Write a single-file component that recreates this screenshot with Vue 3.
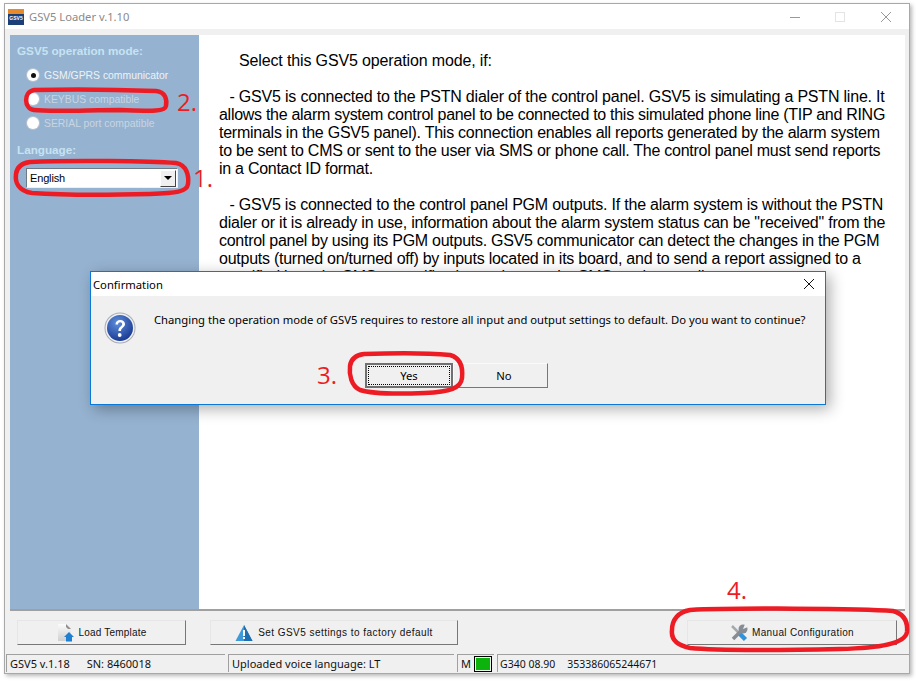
<script setup>
const paragraphs = [
  { cls: 'intro', lines: [{ t: 'Select this GSV5 operation mode, if:', ls: -0.14 }] },
  { cls: 'p', lines: [
    { t: '  - GSV5 is connected to the PSTN dialer of the control panel. GSV5 is simulating a PSTN line. It', ls: -0.2, first: true },
    { t: 'allows the alarm system control panel to be connected to this simulated phone line (TIP and RING', ls: -0.285 },
    { t: 'terminals in the GSV5 panel). This connection enables all reports generated by the alarm system', ls: -0.25 },
    { t: 'to be sent to CMS or sent to the user via SMS or phone call. The control panel must send reports', ls: -0.26 },
    { t: 'in a Contact ID format.', ls: -0.27 }
  ] },
  { cls: 'p', lines: [
    { t: '  - GSV5 is connected to the control panel PGM outputs. If the alarm system is without the PSTN', ls: -0.22, first: true },
    { t: 'dialer or it is already in use, information about the alarm system status can be "received" from the', ls: -0.22 },
    { t: 'control panel by using its PGM outputs. GSV5 communicator can detect the changes in the PGM', ls: -0.27 },
    { t: 'outputs (turned on/turned off) by inputs located in its board, and to send a report assigned to a', ls: -0.25 },
    { t: 'specified input by SMS, or notification to the user by SMS or phone call.', ls: -0.25 }
  ] }
]
const modes = [
  { label: 'GSM/GPRS communicator', on: true },
  { label: 'KEYBUS compatible', on: false },
  { label: 'SERIAL port compatible', on: false }
]
</script>

<template>
  <div class="page">
    <div class="window">
      <header class="titlebar">
        <svg class="appicon" viewBox="0 0 16 16" width="16" height="16">
          <rect width="16" height="16" fill="#1d3f78"/>
          <rect width="16" height="5" fill="#e8892c"/>
          <text x="8" y="11" text-anchor="middle" class="icontext">GSV5</text>
        </svg>
        <span class="apptitle">GSV5 Loader v.1.10</span>
        <div class="winctl">
          <svg viewBox="0 0 46 12" width="46" height="12"><path d="M19 6.500h10" stroke="#999" fill="none"/></svg>
          <svg viewBox="0 0 46 12" width="46" height="12"><rect x="18.500" y="1.500" width="9" height="9" stroke="#e4e4e4" fill="none"/></svg>
          <svg viewBox="0 0 46 12" width="46" height="12"><path d="M18 1l10 10M28 1L18 11" stroke="#999" fill="none"/></svg>
        </div>
      </header>

      <main class="body">
        <aside class="side">
          <div class="sidehead">GSV5 operation mode:</div>
          <div class="modes">
            <label v-for="m in modes" :key="m.label" class="mode" :class="{ on: m.on }">
              <span class="radio"><span v-if="m.on" class="dot"></span></span>
              <span>{{ m.label }}</span>
            </label>
          </div>
          <div class="sidehead lang">Language:</div>
          <div class="combo">
            <span class="comboval">English</span>
            <span class="comboarrow"><span class="tri"></span></span>
          </div>
        </aside>
        <section class="content">
          <p v-for="(p, i) in paragraphs" :key="i" :class="p.cls">
            <span
              v-for="(l, j) in p.lines"
              :key="j"
              class="line"
              :class="{ first: l.first }"
              :style="{ letterSpacing: l.ls + 'px' }"
            >{{ l.t }}</span>
          </p>
        </section>
      </main>

      <div class="actions">
        <button class="btn load">
          <svg viewBox="0 0 18 18" width="18" height="18">
            <defs>
              <linearGradient id="docg" x1="0" y1="0" x2="0" y2="1">
                <stop offset="0" stop-color="#fbfbfb"/>
                <stop offset="1" stop-color="#cfcfcf"/>
              </linearGradient>
            </defs>
            <path d="M2 0h8l5 5v12H2z" fill="url(#docg)"/>
            <path d="M10 0l5 5h-3l-2-2z" fill="#8f8f8f"/>
            <path d="M13 8l5 5h-2v4.500h-6V13H8z" fill="#1f7fd0"/>
          </svg>
          <span>Load Template</span>
        </button>
        <button class="btn factory">
          <svg viewBox="0 0 18 16" width="18" height="16">
            <path d="M9 0l8.500 16H.5z" fill="#3f9ad8"/>
            <path d="M9 0l8.500 16H9z" fill="#1d6fb0"/>
            <rect x="8" y="5" width="2" height="6" fill="#fff"/>
            <rect x="8" y="12" width="2" height="2" fill="#fff"/>
          </svg>
          <span>Set GSV5 settings to factory default</span>
        </button>
        <button class="btn manual">
          <svg viewBox="0 0 18 18" width="18" height="18">
            <path d="M2 2l7 7" stroke="#a4a9ae" stroke-width="2.500" fill="none"/>
            <path d="M9 9l6.500 6.500" stroke="#2f93dc" stroke-width="4.500" fill="none"/>
            <path d="M3 15l8-8" stroke="#858c93" stroke-width="3.500" fill="none"/>
            <circle cx="13" cy="5" r="4.500" fill="#858c93"/>
            <path d="M13 5l2-5h3v3z" fill="#f0f0f0"/>
          </svg>
          <span>Manual Configuration</span>
        </button>
      </div>

      <footer class="status">
        <div class="cell c1"><span>GSV5 v.1.18</span><span class="sn">SN: 8460018</span></div>
        <div class="cell c2">Uploaded voice language: LT</div>
        <div class="cell c3">M<span class="led"></span></div>
        <div class="cell c4">G340 08.90<span class="imei">353386065244671</span></div>
      </footer>

      <div class="dialog">
        <div class="dlgtitle">
          <span>Confirmation</span>
          <svg viewBox="0 0 12 12" width="12" height="12"><path d="M1 1l10 10M11 1L1 11" stroke="#111" fill="none"/></svg>
        </div>
        <div class="dlgbody">
          <div class="dlgmsg">
            <svg class="qicon" viewBox="0 0 32 32" width="32" height="32">
              <defs>
                <radialGradient id="qg" cx="0.4" cy="0.3" r="0.8">
                  <stop offset="0" stop-color="#5f8fdc"/>
                  <stop offset="1" stop-color="#12308a"/>
                </radialGradient>
              </defs>
              <circle cx="16" cy="16" r="15.500" fill="#a8acb4"/>
              <circle cx="16" cy="16" r="14.500" fill="#eef0f4"/>
              <circle cx="16" cy="16" r="13" fill="url(#qg)"/>
              <path d="M11.500 12.500c0-3 2-4.500 4.700-4.500 3 0 4.800 1.700 4.800 4 0 3.500-4 3.500-4 7h-2.600c0-4.500 3.800-4.500 3.800-7 0-1-.8-1.800-2-1.800-1.300 0-2.100.8-2.200 2.300z" fill="#fff"/>
              <circle cx="15.700" cy="23" r="1.900" fill="#fff"/>
            </svg>
            <span>Changing the operation mode of GSV5 requires to restore all input and output settings to default. Do you want to continue?</span>
          </div>
          <div class="dlgbtns">
            <button class="dbtn yes"><span class="focus">Yes</span></button>
            <button class="dbtn no">No</button>
          </div>
        </div>
      </div>
    </div>

    <svg class="marks" viewBox="0 0 916 681" width="916" height="681">
      <g fill="none" stroke="#ed1c24" stroke-width="4.500">
        <path d="M34 90C70 89 130 90 156 91C166 92 167 100 166 106C165 112 150 111 120 110C90 110 50 112 34 110C24 109 23 92 34 90Z"/>
        <path d="M30 162C70 160 150 161 176 163C187 165 189 176 188 184C187 192 176 193 150 194C110 195 60 195 32 193C18 191 15 182 16 174C17 166 22 163 30 162Z"/>
        <path d="M364 354C390 353 430 353 450 355C461 358 463 368 462 378C461 388 450 392 425 393C400 394 372 394 360 390C351 386 349 374 350 366C351 358 356 355 364 354Z"/>
        <path d="M690 610C730 608 860 608 893 611C904 614 908 622 907 632C905 644 880 648 840 649C790 650 720 651 690 648C675 645 671 638 672 630C672 620 678 612 690 610Z"/>
      </g>
    </svg>
    <span class="num n2">2.</span>
    <span class="num n1">1.</span>
    <span class="num n3">3.</span>
    <span class="num n4">4.</span>
  </div>
</template>

<style>
html, body { margin: 0; background: #fff; }
</style>

<style scoped>
.page {
  width: 916px;
  height: 681px;
  padding: 3px 6px 7px 4px;
  box-sizing: border-box;
  position: relative;
  overflow: hidden;
  background: #fff;
}
.window {
  height: 100%;
  box-sizing: border-box;
  border: 1px solid #a8a8a8;
  box-shadow: 2px 2px 4px rgba(0,0,0,.28);
  background: #f0f0f0;
  display: flex;
  flex-direction: column;
}
.titlebar {
  height: 25px;
  flex: none;
  background: #fff;
  display: flex;
  align-items: center;
  padding-left: 3px;
  font: 11.200px "Noto Sans", sans-serif;
  color: #8a8a8a;
}
.icontext { font: 700 5px "Liberation Sans", sans-serif; fill: #fff; }
.apptitle { margin-left: 5px; }
.winctl { margin-left: auto; display: flex; }
.body {
  flex: 1;
  min-height: 0;
  display: flex;
  margin: 6px 4px 0 5px;
  border-bottom: 2px solid #a0a0a0;
}
.side {
  width: 189px;
  flex: none;
  background: #95b2d0;
  box-sizing: border-box;
  padding: 9px 0 0 7px;
  font-family: "Liberation Sans", sans-serif;
}
.sidehead { font-size: 11.700px; font-weight: 700; color: #c6e3f2; line-height: 14px; }
.sidehead.lang { margin-top: 8px; }
.modes { display: flex; flex-direction: column; margin-top: 5px; }
.mode {
  height: 24px;
  display: flex;
  align-items: center;
  gap: 5px;
  margin-left: 10px;
  font-size: 10.400px;
  color: #c9d5e2;
}
.mode.on { color: #eef2f6; }
.radio {
  width: 12px;
  height: 12px;
  border-radius: 50%;
  background: #fff;
  box-shadow: 0 0 0 1px #b9c3cf;
  display: flex;
  align-items: center;
  justify-content: center;
}
.dot { width: 5px; height: 5px; border-radius: 50%; background: #111; }
.combo {
  margin-top: 11px;
  margin-left: 9px;
  width: 152px;
  height: 20px;
  box-sizing: border-box;
  background: #fff;
  border: 1px solid;
  border-color: #6d7a88 #f0f0f0 #f0f0f0 #6d7a88;
  display: flex;
  align-items: center;
  justify-content: space-between;
  padding: 0 1px 0 3px;
  font: 11px "Liberation Sans", sans-serif;
  letter-spacing: -.15px;
  color: #000;
}
.comboarrow {
  width: 16px;
  height: 17px;
  background: #f0f0f0;
  border: 1px solid;
  border-color: #fff #444 #444 #fff;
  box-sizing: border-box;
  display: flex;
  align-items: center;
  justify-content: center;
}
.tri { border: 4.500px solid transparent; border-top: 4.500px solid #000; border-bottom: 0; }
.content {
  flex: 1;
  background: #fff;
  padding: 17px 0 0 20px;
  font: 16px/18px "Liberation Sans", sans-serif;
  color: #000;
  overflow: hidden;
}
.content p { margin: 0 0 18px; }
.line { display: block; white-space: pre; }
.line.first { padding-left: 2px; }
.content .intro { padding-left: 20px; }
.actions {
  height: 37px;
  flex: none;
  display: flex;
  margin-top: 9px;
  padding-left: 12px;
}
.btn {
  height: 25px;
  box-sizing: border-box;
  background: #f0f0f0;
  border: 1px solid;
  border-color: #e6e6e6 #777 #777 #e6e6e6;
  display: flex;
  align-items: center;
  justify-content: center;
  gap: 3px;
  font: 10px "Liberation Sans", sans-serif;
  letter-spacing: .2px;
  color: #111;
  padding: 0;
}
.btn.load { width: 169px; gap: 4px; }
.btn.factory { width: 248px; margin-left: 24px; gap: 5px; letter-spacing: .45px; }
.btn.manual { width: 210px; margin-left: auto; margin-right: 12px; letter-spacing: .35px; gap: 4px; }
.status {
  height: 19px;
  flex: none;
  display: flex;
  margin: -3px 0 0 1px;
  font: 11px "Noto Sans", sans-serif;
  color: #111;
  gap: 3px;
}
.cell {
  box-sizing: border-box;
  height: 18px;
  border-top: 1px solid #a0a0a0;
  border-left: 1px solid #a0a0a0;
  display: flex;
  align-items: center;
  padding-left: 3px;
  white-space: nowrap;
}
.c1 { width: 219px; }
.sn { margin-left: 17px; }
.c2 { width: 226px; }
.c3 { width: 37px; }
.led {
  width: 18px;
  height: 16px;
  margin-left: 3px;
  box-sizing: border-box;
  background: #0cb30c;
  border: 1px solid #000;
  box-shadow: inset 0 0 0 1px #f0f0f0;
}
.c4 { flex: 1; font-size: 10.500px; padding-left: 2px; }
.imei { margin-left: 12px; }
.dialog {
  position: absolute;
  left: 90px;
  top: 271px;
  width: 736px;
  height: 134px;
  box-sizing: border-box;
  border: 1px solid #0a78d7;
  background: #f0f0f0;
  box-shadow: 4px 4px 14px rgba(0,0,0,.32);
  font: 11.250px "Noto Sans", sans-serif;
  color: #000;
  display: flex;
  flex-direction: column;
}
.dlgtitle {
  height: 24px;
  background: #fff;
  display: flex;
  align-items: center;
  justify-content: space-between;
  padding: 0 10px 0 2px;
  flex: none;
}
.dlgbody { flex: 1; display: flex; flex-direction: column; }
.dlgmsg {
  display: flex;
  align-items: flex-start;
  gap: 18px;
  padding: 16px 0 0 13px;
  height: 34px;
}
.qicon { flex: none; }
.dlgbtns {
  display: flex;
  margin-left: 274px;
  margin-top: 17px;
}
.dbtn {
  width: 88px;
  height: 25px;
  box-sizing: border-box;
  background: #f0f0f0;
  font: inherit;
  color: #000;
  padding: 0;
  border: 1px solid;
  border-color: #fafafa #777 #777 #fafafa;
}
.dbtn.yes {
  border: 2px solid #707070;
  display: flex;
  padding: 1px;
}
.focus {
  flex: 1;
  border: 1px dotted #000;
  display: flex;
  align-items: center;
  justify-content: center;
}
.dbtn.no { width: 95px; padding-left: 7px; }
.marks { position: absolute; left: 0; top: 0; pointer-events: none; }
.num {
  position: absolute;
  font: 24px/28px "Open Sans", sans-serif;
  color: #ed1c24;
}
.n2 { left: 177px; top: 88px; }
.n1 { left: 193px; top: 164px; }
.n3 { left: 317px; top: 361px; }
.n4 { left: 727px; top: 576px; }
</style>
